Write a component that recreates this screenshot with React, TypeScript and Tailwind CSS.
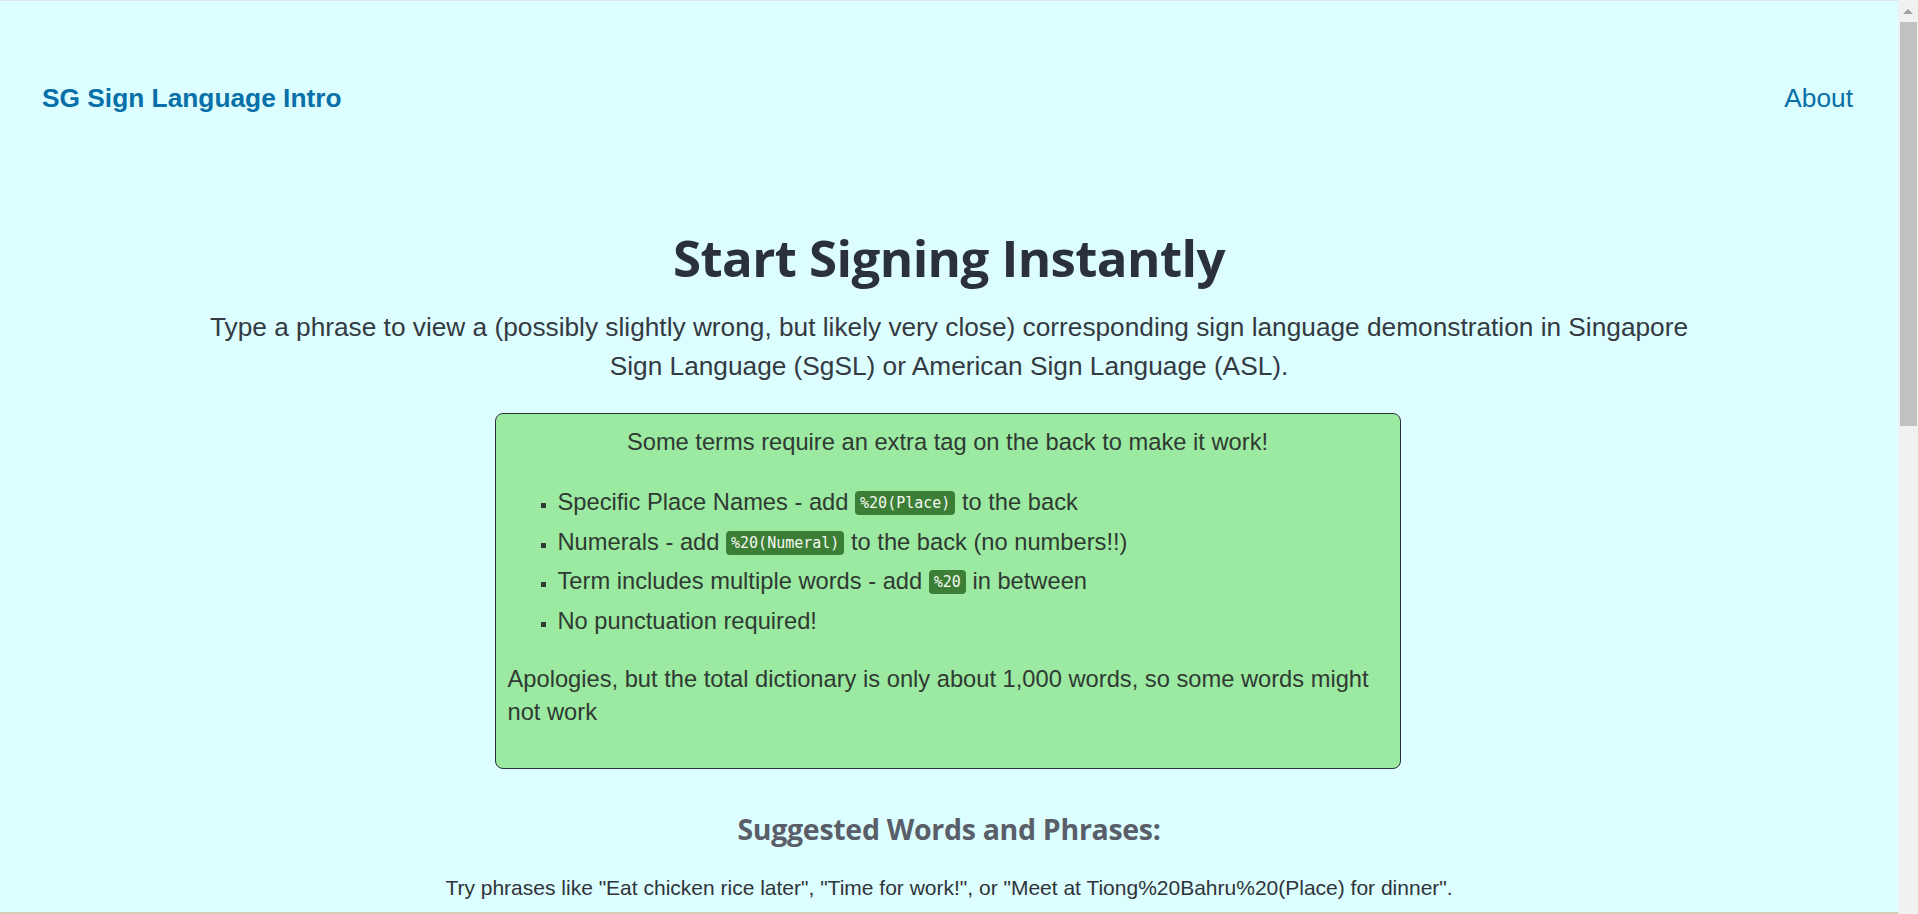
import React from "react";

const Code = ({ children }: { children: React.ReactNode }) => (
  <code className="rounded-[4px] bg-[#3b7e35] px-[5px] py-[3px] font-['DejaVu_Sans_Mono',monospace] text-[15px] leading-none text-[#f4f8f0] align-[2px]">
    {children}
  </code>
);

export default function App() {
  return (
    <div className="flex h-[914px] w-full overflow-hidden bg-[#dcfeff] font-['Liberation_Sans',Arial,sans-serif]">
      <div className="flex min-w-0 flex-1 flex-col border-t border-[#dde5e8]">
        {/* top nav */}
        <nav className="flex items-center justify-between pl-[42px] pr-[45px] pt-[82px]">
          <span className="text-[26.3px] font-bold leading-[30px] text-[#0870a8]">
            SG Sign Language Intro
          </span>
          <span className="text-[26.3px] leading-[30px] text-[#0870a8]">About</span>
        </nav>

        <main className="flex flex-col items-center text-center">
          <h1 className="mt-[112px] font-['Open_Sans',sans-serif] text-[51px] font-bold leading-[64px] tracking-[-0.6px] text-[#2b313a]">
            Start Signing Instantly
          </h1>
          <p className="mt-[19px] max-w-[1500px] text-[26.25px] leading-[39px] text-[#343a42]">
            Type a phrase to view a (possibly slightly wrong, but likely very close) corresponding sign language
            demonstration in Singapore Sign Language (SgSL) or American Sign Language (ASL).
          </p>

          {/* tips box */}
          <div className="mt-[27px] ml-[-3px] w-[906px] rounded-[8px] border border-[#2c2f33] bg-[#9ce9a1] px-[12px] pb-[39px] pt-[12px] text-left text-[23.7px] text-[#2f3a33]">
            <p className="text-center leading-[33px]">
              Some terms require an extra tag on the back to make it work!
            </p>
            <ul className="mt-[24px] list-[square] pl-[50px] leading-[39.5px] marker:text-[18px]">
              <li>
                Specific Place Names - add <Code>%20(Place)</Code> to the back
              </li>
              <li>
                Numerals - add <Code>%20(Numeral)</Code> to the back (no numbers!!)
              </li>
              <li>
                Term includes multiple words - add <Code>%20</Code> in between
              </li>
              <li>No punctuation required!</li>
            </ul>
            <p className="mt-[22px] leading-[33px]">
              Apologies, but the total dictionary is only about 1,000 words, so some words might not work
            </p>
          </div>

          <h2 className="mt-[40px] font-['Open_Sans',sans-serif] text-[28.5px] font-bold leading-[40px] tracking-[-0.3px] text-[#5a5e69]">
            Suggested Words and Phrases:
          </h2>
          <p className="mt-[25px] text-[21px] leading-[28px] text-[#2f343a]">
            Try phrases like "Eat chicken rice later", "Time for work!", or "Meet at Tiong%20Bahru%20(Place) for
            dinner".
          </p>
        </main>
        <div className="mt-auto h-[2px] bg-[#d4cdb4]" />
      </div>

      {/* scrollbar */}
      <div className="flex w-[20px] flex-col items-center bg-[#f1f1f1] pt-[9px]">
        <div className="h-0 w-0 border-x-[5px] border-b-[5px] border-x-transparent border-b-[#a3a3a3]" />
        <div className="mt-[8px] h-[404px] w-[17px] bg-[#c1c1c1]" />
      </div>
    </div>
  );
}
